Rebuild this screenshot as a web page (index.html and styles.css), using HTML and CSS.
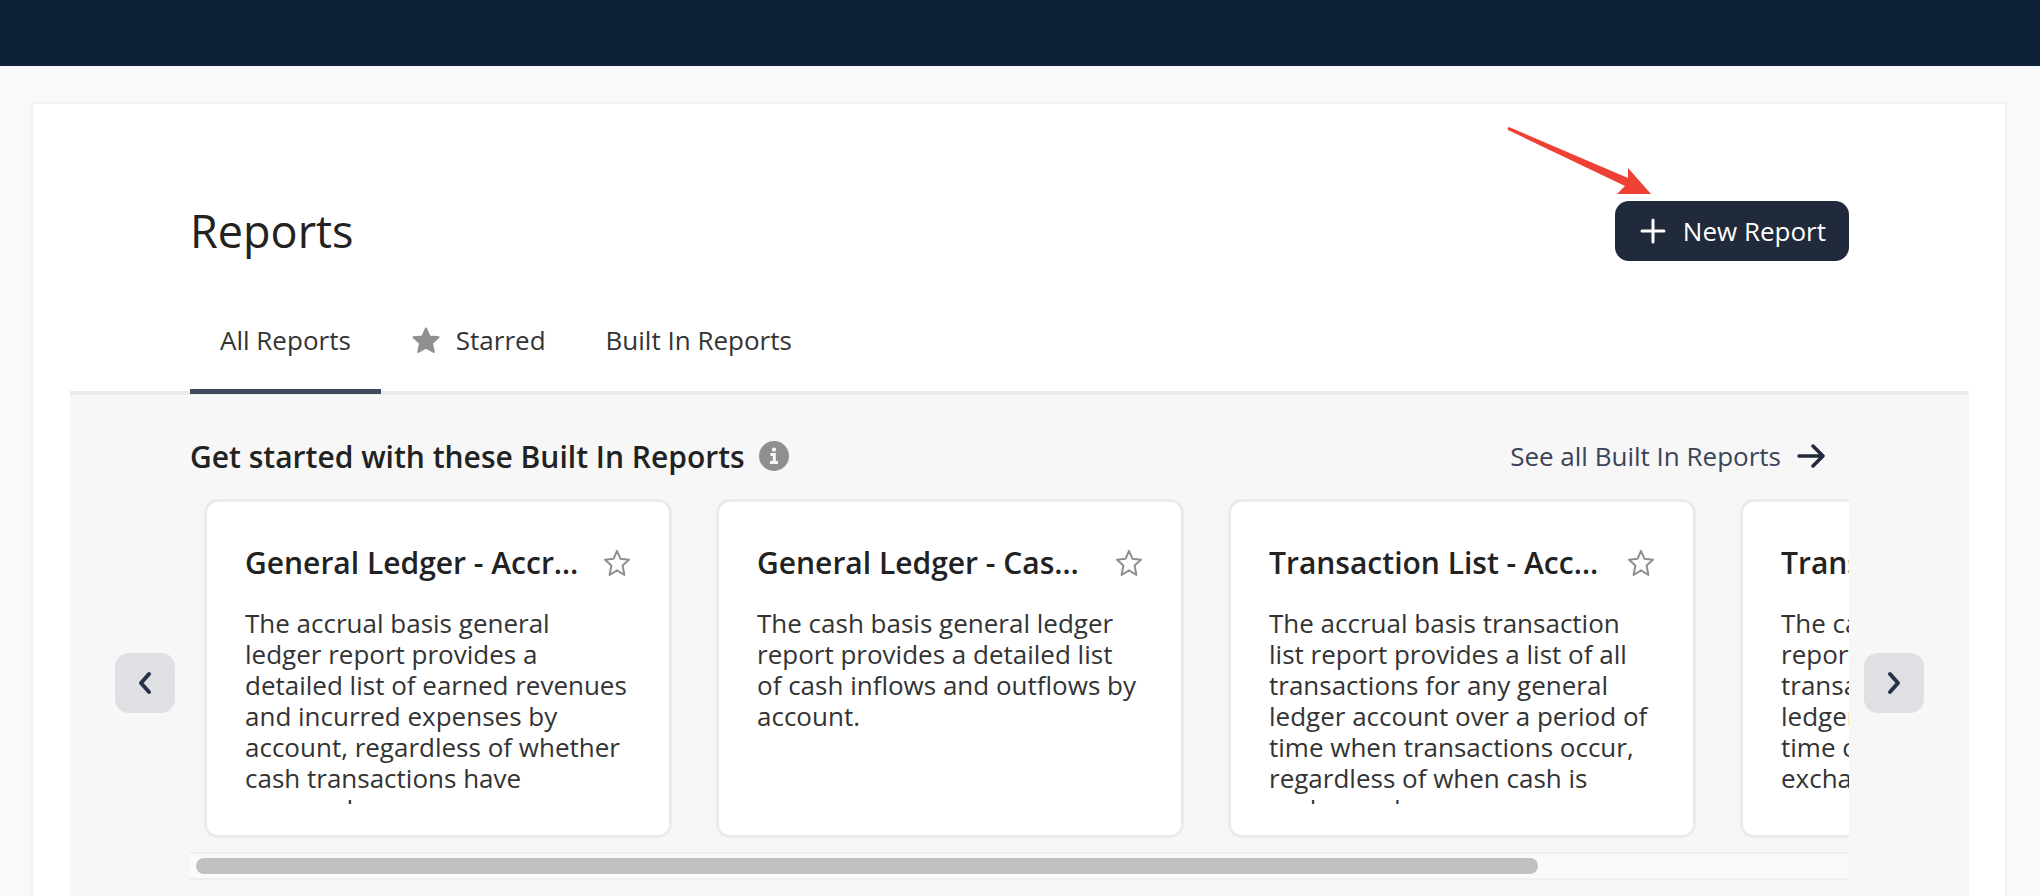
FILE: index.html
```html
<!DOCTYPE html>
<html lang="en">
<head>
    <meta charset="UTF-8">
    <meta name="viewport" content="width=device-width, initial-scale=1.0">
    <title>Reports</title>
    <link rel="stylesheet" href="styles.css">
</head>
<body>
    <header class="topbar"></header>

    <main class="panel">
        <div class="page-header">
            <h1>Reports</h1>
            <div class="new-report">
                <button class="new-report-btn" type="button">
                    <svg width="26" height="26" viewBox="0 0 26 26" fill="none" stroke="currentColor" stroke-width="3" stroke-linecap="round">
                        <path d="M13 2v22M2 13h22"/>
                    </svg>
                    New Report
                </button>
                <svg class="pointer-arrow" width="146" height="70" viewBox="0 0 146 70">
                    <path fill="#ee4035" d="M3 1L122 52L122 42L145 68L111 68L119 60L2 4Q1 2 3 1Z"/>
                </svg>
            </div>
        </div>

        <nav class="tabs">
            <a class="tab active" href="#all">All Reports</a>
            <a class="tab" href="#starred">
                <svg width="30" height="30" viewBox="0 0 30 30">
                    <path fill="#8f8f8f" stroke="#8f8f8f" stroke-width="2" stroke-linejoin="round" d="M15 2.5L18.6 10.4L27.5 11.3L20.9 17.3L22.8 26L15 21.6L7.2 26L9.1 17.3L2.5 11.3L11.4 10.4Z"/>
                </svg>
                Starred
            </a>
            <a class="tab" href="#built-in">Built In Reports</a>
        </nav>

        <section class="built-in">
            <div class="section-header">
                <h2>Get started with these Built In Reports</h2>
                <svg width="30" height="30" viewBox="0 0 30 30">
                    <circle cx="15" cy="15" r="15" fill="#8f8f8f"/>
                    <circle cx="15" cy="8.6" r="2.1" fill="#f7f7f7"/>
                    <path fill="none" stroke="#f7f7f7" stroke-width="3" d="M11.5 13.5H15.3V22M11 21.5H19"/>
                </svg>
                <a class="see-all" href="#built-in">
                    See all Built In Reports
                    <svg width="28" height="28" viewBox="0 0 28 28" fill="none" stroke="#1f2a3d" stroke-width="3.5" stroke-linecap="round" stroke-linejoin="round">
                        <path d="M2 14H25M16 4L26 14L16 24"/>
                    </svg>
                </a>
            </div>

            <div class="carousel">
                <button class="nav-btn" type="button" aria-label="Previous">
                    <svg width="16" height="26" viewBox="0 0 16 26"><path d="M12 4L4 13L12 22"/></svg>
                </button>
                <div class="viewport">
                    <div class="cards">
                        <article class="card">
                            <div class="card-header">
                                <h3>General Ledger - Accrual Basis</h3>
                                <button class="star-btn" type="button" aria-label="Star report">
                                    <svg width="28" height="28" viewBox="0 0 28 28"><path d="M14 2L17.5 9.8L26 10.7L19.6 16.5L21.4 26L14 21.3L6.6 26L8.4 16.5L2 10.7L10.5 9.8Z"/></svg>
                                </button>
                            </div>
                            <p>The accrual basis general ledger report provides a detailed list of earned revenues and incurred expenses by account, regardless of whether cash transactions have occurred.</p>
                        </article>
                        <article class="card">
                            <div class="card-header">
                                <h3>General Ledger - Cash Basis</h3>
                                <button class="star-btn" type="button" aria-label="Star report">
                                    <svg width="28" height="28" viewBox="0 0 28 28"><path d="M14 2L17.5 9.8L26 10.7L19.6 16.5L21.4 26L14 21.3L6.6 26L8.4 16.5L2 10.7L10.5 9.8Z"/></svg>
                                </button>
                            </div>
                            <p>The cash basis general ledger report provides a detailed list of cash inflows and outflows by account.</p>
                        </article>
                        <article class="card">
                            <div class="card-header">
                                <h3>Transaction List - Accrual Basis</h3>
                                <button class="star-btn" type="button" aria-label="Star report">
                                    <svg width="28" height="28" viewBox="0 0 28 28"><path d="M14 2L17.5 9.8L26 10.7L19.6 16.5L21.4 26L14 21.3L6.6 26L8.4 16.5L2 10.7L10.5 9.8Z"/></svg>
                                </button>
                            </div>
                            <p>The accrual basis transaction list report provides a list of all transactions for any general ledger account over a period of time when transactions occur, regardless of when cash is exchanged.</p>
                        </article>
                        <article class="card">
                            <div class="card-header">
                                <h3>Transaction List - Cash Basis</h3>
                                <button class="star-btn" type="button" aria-label="Star report">
                                    <svg width="28" height="28" viewBox="0 0 28 28"><path d="M14 2L17.5 9.8L26 10.7L19.6 16.5L21.4 26L14 21.3L6.6 26L8.4 16.5L2 10.7L10.5 9.8Z"/></svg>
                                </button>
                            </div>
                            <p>The cash basis transaction list report provides a list of all transactions for any general ledger account over a period of time only when cash is being exchanged.</p>
                        </article>
                    </div>
                    <div class="scrollbar">
                        <div class="scroll-thumb" style="width: 81.5%"></div>
                    </div>
                </div>
                <button class="nav-btn" type="button" aria-label="Next">
                    <svg width="16" height="26" viewBox="0 0 16 26"><path d="M4 4L12 13L4 22"/></svg>
                </button>
            </div>
        </section>
    </main>
</body>
</html>
```

FILE: styles.css
```css
* {
    box-sizing: border-box;
}

body {
    display: flex;
    flex-direction: column;
    margin: 0;
    min-height: 100vh;
    background-color: #f8f9fb;
    color: #333;
    font-family: "Open Sans", sans-serif;
    font-size: 26px;
    line-height: 31px;
}

h1, h2, h3, p {
    margin: 0;
}

h1, h2, h3 {
    color: #222;
}

button {
    font: inherit;
    border: none;
    padding: 0;
    cursor: pointer;
}

a {
    color: inherit;
    text-decoration: none;
}

svg {
    display: block;
    flex-shrink: 0;
}

.topbar {
    height: 66px;
    background: #0f2138;
}

.panel {
    display: flex;
    flex: 1;
    flex-direction: column;
    margin: 36px 33px 0 31px;
    padding: 97px 36px 0 37px;
    background: #fff;
    border: 2px solid #f0f2f4;
    border-bottom: none;
}

.page-header {
    display: flex;
    align-items: center;
    justify-content: space-between;
    padding: 0 120px;
}

h1 {
    font-size: 45px;
    line-height: 60px;
    font-weight: 400;
}

.new-report {
    position: relative;
}

.new-report-btn {
    display: flex;
    align-items: center;
    gap: 17px;
    height: 60px;
    padding: 0 23px 0 25px;
    border-radius: 14px;
    background: #202a3a;
    color: #fff;
}

/* callout arrow over the header */
.pointer-arrow {
    position: absolute;
    right: 197px;
    bottom: 65px;
}

.tabs {
    display: flex;
    margin-top: 50px;
    padding: 0 120px;
    border-bottom: 4px solid #ececec;
}

.tab {
    display: flex;
    align-items: center;
    gap: 15px;
    height: 83px;
    margin-bottom: -3px;
    padding: 0 30px 19px;
    border-bottom: 5px solid transparent;
}

.tab.active {
    border-bottom-color: #414a5c;
}

.built-in {
    flex: 1;
    background: #f7f7f7;
    padding: 45px 45px 0;
}

.section-header {
    display: flex;
    align-items: center;
    padding: 0 99px 0 75px;
    height: 32px;
}

h2 {
    margin-right: 14px;
    font-size: 30px;
    font-weight: 600;
}

.see-all {
    display: flex;
    align-items: center;
    gap: 16px;
    margin-left: auto;
    color: #3a4459;
}

.carousel {
    display: flex;
    align-items: center;
    gap: 15px;
    margin-top: 13px;
}

.nav-btn {
    display: flex;
    flex-shrink: 0;
    align-items: center;
    justify-content: center;
    width: 60px;
    height: 60px;
    border-radius: 14px;
    background: #dfe0e4;
}

.nav-btn svg {
    fill: none;
    stroke: #27324a;
    stroke-width: 4px;
    stroke-linecap: round;
    stroke-linejoin: round;
}

.viewport {
    flex: 1;
    min-width: 0;
}

.cards {
    display: flex;
    gap: 44px;
    padding: 14px;
    overflow-x: auto;
    scrollbar-width: none;
}

.scrollbar {
    height: 28px;
    padding: 4px 6px;
    background: #fafafa;
    border-top: 2px solid #eee;
    border-bottom: 2px solid #eee;
}

.scroll-thumb {
    height: 16px;
    border-radius: 8px;
    background: #c1c1c1;
}

.card {
    flex-shrink: 0;
    width: 468px;
    height: 339px;
    padding: 43px 38px 0;
    background: #fff;
    border: 3px solid #ebebeb;
    border-radius: 14px;
}

.card-header {
    display: flex;
    align-items: center;
    justify-content: space-between;
    gap: 20px;
    height: 36px;
}

h3 {
    overflow: hidden;
    font-size: 30px;
    line-height: 36px;
    font-weight: 600;
    white-space: nowrap;
    text-overflow: ellipsis;
}

.star-btn {
    background: none;
}

.star-btn svg {
    fill: none;
    stroke: #8f8f8f;
    stroke-width: 2px;
    stroke-linejoin: round;
}

.card p {
    height: 196px;
    margin-top: 27px;
    overflow: hidden;
}
```
